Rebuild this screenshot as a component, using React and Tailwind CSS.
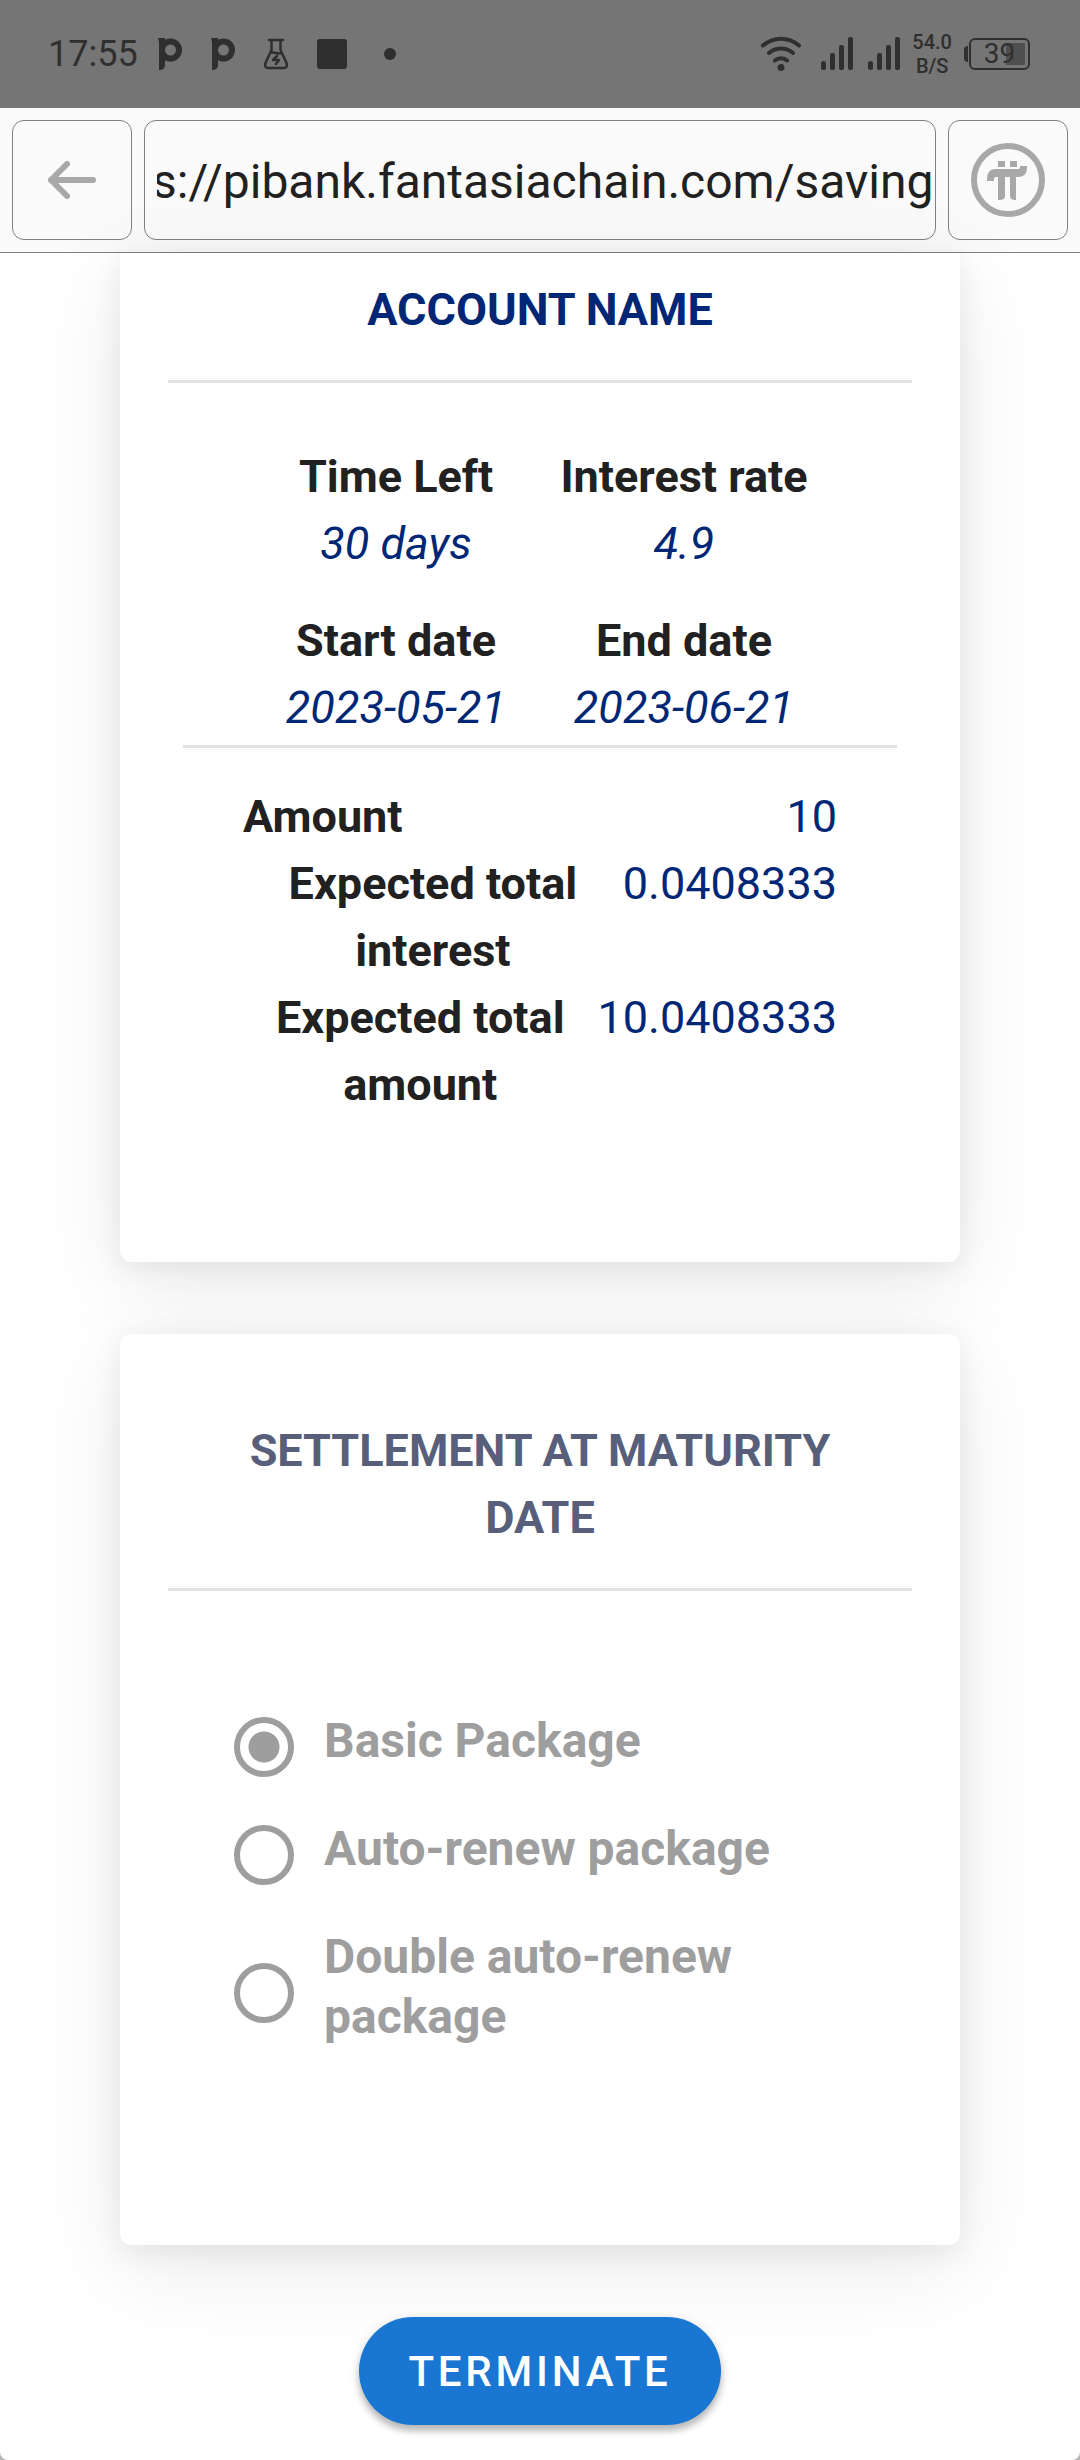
import { useEffect, useRef } from 'react'

const TERMS = [
  { label: 'Time Left', value: '30 days' },
  { label: 'Interest rate', value: '4.9' },
  { label: 'Start date', value: '2023-05-21' },
  { label: 'End date', value: '2023-06-21' },
]

const TOTALS = [
  { label: 'Amount', value: '10' },
  { label: 'Expected total interest', value: '0.0408333' },
  { label: 'Expected total amount', value: '10.0408333' },
]

const PACKAGES = [
  { id: 'basic', label: 'Basic Package' },
  { id: 'auto', label: 'Auto-renew package' },
  { id: 'double', label: 'Double auto-renew package' },
]

function AppIcon() {
  return (
    <svg className="w-6 h-8" viewBox="0 0 24 32" fill="none">
      <circle cx="12.5" cy="12" r="8.5" stroke="currentColor" strokeWidth="6" />
      <path d="M0 0h7v27c0 3-2 5-6 5V4z" fill="currentColor" />
    </svg>
  )
}

function FlaskIcon() {
  return (
    <svg className="w-6 h-8" viewBox="0 0 24 32" fill="none" stroke="currentColor" strokeWidth="2.5" strokeLinecap="round" strokeLinejoin="round">
      <path d="M5 2h14M7.500 2v10L1.500 25c-1 3 0 5 2 5h17c2 0 3-2 2-5L16.500 12V2M6.500 15c4-2 7 2 11 0" />
      <path d="M13 18l-4 4h6l-3 4" />
    </svg>
  )
}

function WifiIcon() {
  return (
    <svg className="w-[42px] h-9" viewBox="0 0 42 36" fill="none" stroke="currentColor" strokeWidth="4" strokeLinecap="round">
      <path d="M3 9.500C14 .500 28 .500 39 9.500M9 17c7-6 17-6 24 0M15 24.500c3-3 9-3 12 0" />
      <circle cx="21" cy="31.500" r="3.500" fill="currentColor" stroke="none" />
    </svg>
  )
}

function SignalIcon() {
  return (
    <svg className="w-8 h-[34px]" viewBox="0 0 32 34" fill="currentColor">
      <rect x="0" y="24" width="5" height="9" rx="2.500" />
      <rect x="9" y="16" width="5" height="17" rx="2" />
      <rect x="18" y="8" width="5" height="25" rx="2" />
      <rect x="27" y="0" width="5" height="33" rx="2" />
    </svg>
  )
}

function StatusBar() {
  return (
    <div className="h-[108px] pl-12 pr-[50px] flex items-center justify-between bg-[#757575] text-[#2f2f2f]">
      <div className="flex items-center">
        <span className="text-[36px] leading-9 mr-5">17:55</span>
        <div className="flex items-center gap-[29px]">
          <AppIcon />
          <AppIcon />
          <FlaskIcon />
          <span className="size-[30px] rounded-[3px] bg-[#2f2f2f]" />
          <span className="size-3 ml-2 rounded-full bg-[#2f2f2f]" />
        </div>
      </div>
      <div className="flex items-center">
        <WifiIcon />
        <div className="flex gap-[15px] ml-[19px] mr-3">
          <SignalIcon />
          <SignalIcon />
        </div>
        <div className="text-[20px] leading-6 font-medium text-center">
          <p>54.0</p>
          <p>B/S</p>
        </div>
        <div className="flex items-center gap-px ml-3">
          <span className="w-1 h-4 rounded-l-sm bg-[#2f2f2f]" />
          <div className="w-[61px] h-8 p-[3px] flex items-center justify-center border-2 border-[#2f2f2f] rounded-md bg-linear-to-l from-[#4f4f4f] from-38% to-transparent to-38% bg-clip-content">
            <span className="text-[28px] leading-7">39</span>
          </div>
        </div>
      </div>
    </div>
  )
}

function BrowserBar() {
  const url = useRef(null)

  // keep the end of a long address in view
  useEffect(() => {
    url.current.scrollLeft = url.current.scrollWidth
  }, [])

  return (
    <div className="p-3 flex gap-3 bg-[#fafafa] border-b border-[#808080]">
      <button aria-label="Back" className="size-[120px] shrink-0 flex items-center justify-center border border-[#808080] rounded-xl text-[#a8a8a8]">
        <svg className="w-12 h-[38px]" viewBox="0 0 48 38" fill="none" stroke="currentColor" strokeWidth="6" strokeLinecap="round" strokeLinejoin="round">
          <path d="M45 19H3M19 3L3 19l16 16" />
        </svg>
      </button>
      <input ref={url} aria-label="Address" defaultValue="s://pibank.fantasiachain.com/saving"
        className="flex-1 min-w-0 h-[120px] pt-0.5 pl-3 pr-0.5 border border-[#808080] rounded-xl text-[48px] text-[#212121] bg-transparent outline-none" />
      <button aria-label="Pi" className="size-[120px] shrink-0 flex items-center justify-center border border-[#808080] rounded-xl text-[#a8a8a8]">
        <svg className="size-[74px]" viewBox="0 0 74 74" fill="none">
          <circle cx="37" cy="37" r="34" stroke="currentColor" strokeWidth="6" />
          <path fill="currentColor" d="M27 18h7v6h-7zM39 18h7v6h-7zM16 38c0-8 2-12 9-12h22c2 0 2-1 2-3h7c0 7-2 11-9 11H25c-2 0-2 2-2 4zM27 32h7v21c0 3-2 4-7 4zM39 32h6v25c-4 0-6-1-6-4z" />
        </svg>
      </button>
    </div>
  )
}

const CARD = 'bg-white shadow-[0_24px_96px_rgba(0,0,0,0.08),0_6px_30px_rgba(0,0,0,0.08)]'

function AccountCard() {
  return (
    <section className={`${CARD} rounded-b-xl pt-[23px] px-12 pb-36`}>
      <h2 className="text-center font-bold uppercase text-[#002776]">Account name</h2>
      <hr className="mt-[37px] border-t-3 border-[#e2e2e2]" />
      <dl className="mt-15 mx-[84px] grid grid-cols-2 gap-y-[30px] text-center">
        {TERMS.map(t => (
          <div key={t.label}>
            <dt className="font-bold">{t.label}</dt>
            <dd className="italic text-[#002776]">{t.value}</dd>
          </div>
        ))}
      </dl>
      <hr className="mt-1 mx-[15px] border-t-3 border-[#e2e2e2]" />
      <dl className="mt-[35px] mx-[75px]">
        {TOTALS.map(t => (
          <div key={t.label} className="flex justify-between">
            <dt className="font-bold text-center">{t.label}</dt>
            <dd className="text-[#002776]">{t.value}</dd>
          </div>
        ))}
      </dl>
    </section>
  )
}

function SettlementCard() {
  return (
    <section className={`${CARD} rounded-xl pt-[83px] px-12 pb-[186px]`}>
      <h2 className="px-8 text-center font-bold uppercase text-[#585f7a]">Settlement at maturity date</h2>
      <hr className="mt-[37px] border-t-3 border-[#e2e2e2]" />
      <div role="radiogroup" aria-label="Settlement at maturity date" className="mt-30 mx-15 flex flex-col gap-9">
        {PACKAGES.map((p, i) => (
          <div key={p.id} className="flex items-center gap-[30px] px-1.5">
            <input type="radio" id={p.id} name="package" defaultChecked={i === 0} disabled
              className="appearance-none size-15 shrink-0 rounded-full border-6 border-[#9e9e9e] checked:bg-[radial-gradient(circle,#9e9e9e_15px,transparent_16px)]" />
            <label htmlFor={p.id} className="pb-3 text-[48px] leading-[60px] font-bold text-[#9e9e9e]">{p.label}</label>
          </div>
        ))}
      </div>
    </section>
  )
}

export default function App() {
  return (
    <div className="bg-[#b5b5b5]">
      <div className="min-h-screen overflow-hidden rounded-b-lg bg-white font-[Roboto,sans-serif] text-[45px] leading-[67px] text-[#212121]">
        <StatusBar />
        <BrowserBar />
        <main className="px-30 pb-8 flex flex-col gap-18">
          <AccountCard />
          <SettlementCard />
          <button className="self-center h-27 px-[49px] rounded-full bg-[#1976d2] text-white text-[42px] font-medium uppercase tracking-[0.09em] shadow-[0_6px_6px_rgba(0,0,0,0.2),0_3px_12px_rgba(0,0,0,0.14)]">
            Terminate
          </button>
        </main>
      </div>
    </div>
  )
}
